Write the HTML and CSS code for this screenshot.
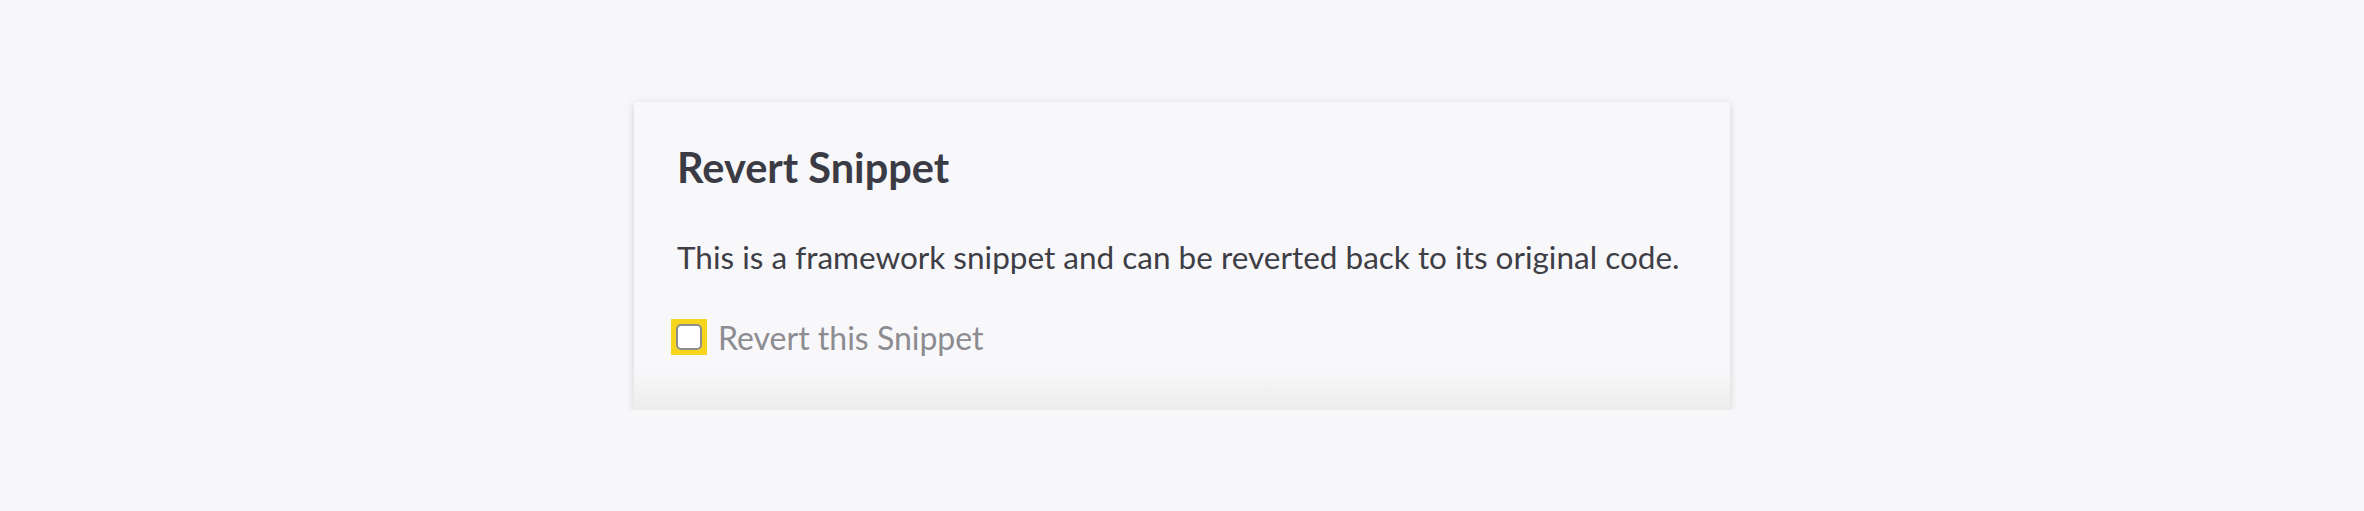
FILE: index.html
```html
<!DOCTYPE html>
<html>
	<head>
		<meta charset="utf-8">
		<title>Revert Snippet</title>
		<link rel="stylesheet" href="styles.css">
	</head>
	<body>
		<div class="card">
			<h2 class="title">Revert Snippet</h2>
			<p class="desc">This is a framework snippet and can be reverted back to its original code.</p>
			<label class="check">
				<span class="mark"><input type="checkbox" class="box"></span>
				<span>Revert this Snippet</span>
			</label>
		</div>
	</body>
</html>
```
FILE: styles.css
```css
body {
	margin: 0;
	background-color: #f7f7f9;
	font-family: Lato, "Noto Sans", sans-serif;
}

.card {
	width: 1096px;
	box-sizing: border-box;
	margin: 102px auto 0;
	padding: 41px 43px 54px;
	background: linear-gradient(to bottom, #f8f8fa 0, #f8f8fa 268px, #ececec 100%);
	box-shadow: 0 2px 8px rgba(0, 0, 0, 0.15);
}

.title {
	margin: 0 0 46px;
	font-size: 41.5px;
	font-weight: 700;
	line-height: 1.2;
	color: #3b3b45;
}

.desc {
	margin: 0 0 44px;
	font-size: 31.5px;
	line-height: 36px;
	color: #3e3e46;
}

.check {
	display: flex;
	align-items: center;
	gap: 11px;
	font-size: 32px;
	line-height: 37px;
	color: #8c8c91;
}

.mark {
	display: flex;
	margin-left: -6px;
	padding: 5px;
	background-color: #f7d51d;
}

.box {
	appearance: none;
	-webkit-appearance: none;
	margin: 0;
	width: 26px;
	height: 26px;
	box-sizing: border-box;
	border: 2px solid #8d8d8d;
	border-radius: 5px;
	background-color: #fff;
}
```
